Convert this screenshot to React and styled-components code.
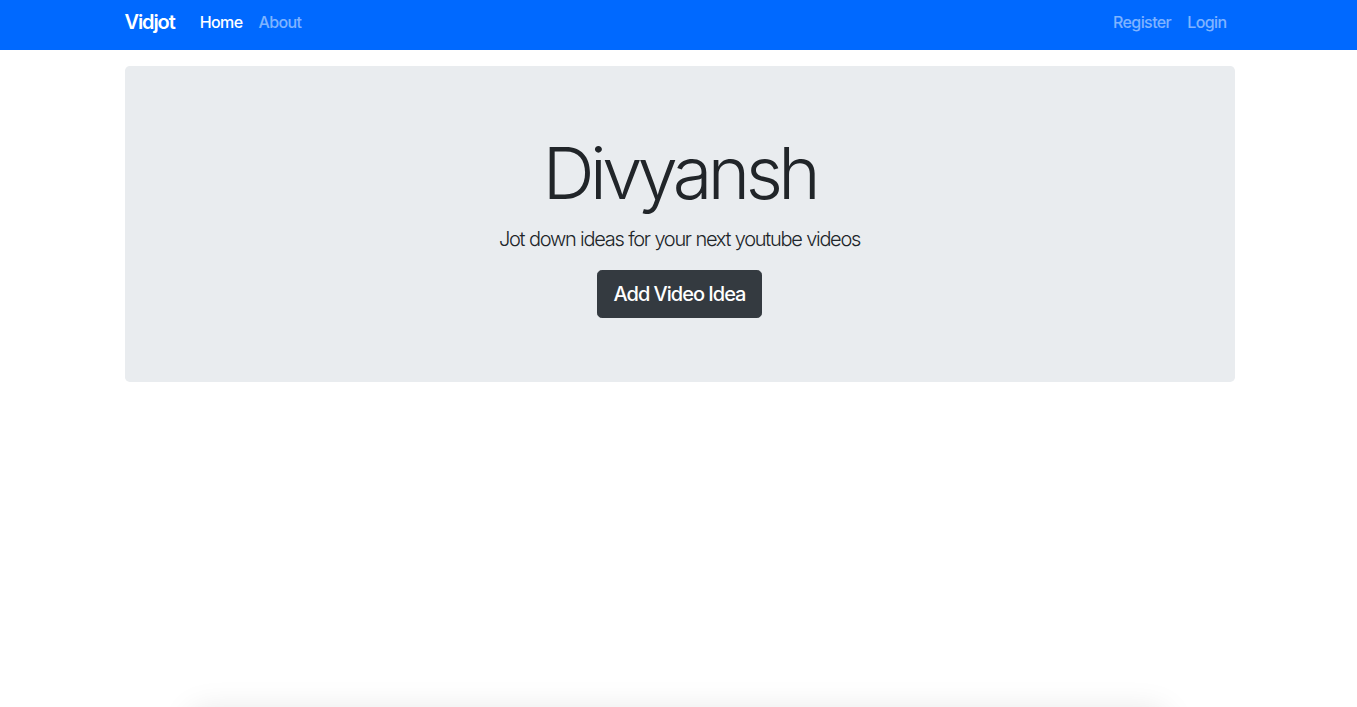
import React from "react";
import styled, { createGlobalStyle } from "styled-components";

const Global = createGlobalStyle`
  * { box-sizing: border-box; }
  html, body { margin: 0; padding: 0; background: #fff; }
  body {
    font-family: Inter, "Noto Sans", "Liberation Sans", sans-serif;
    color: #212529;
    font-size: 16px;
    line-height: 1.5;
    overflow: hidden;
  }
`;

const Navbar = styled.nav`
  background: #0069ff;
  height: 50px;
  margin-bottom: 16px;
`;

const Container = styled.div`
  width: 1140px;
  margin: 0 auto;
  padding: 0 14px 0 16px;
`;

const NavInner = styled(Container)`
  height: 100%;
  display: flex;
  align-items: center;
  padding-bottom: 6px;
`;

const Brand = styled.a`
  font-size: 20px;
  font-weight: 600;
  color: #fff;
  text-decoration: none;
  margin-right: 17px;
  letter-spacing: -1.1px;
  line-height: 30px;
`;

const NavList = styled.div`
  display: flex;
  align-items: center;
  margin-left: ${(p) => (p.$right ? "auto" : "0")};
`;

const NavLink = styled.a`
  padding: 8px;
  font-size: 16px;
  font-weight: 500;
  line-height: 24px;
  text-decoration: none;
  color: ${(p) => (p.$active ? "#fff" : "rgba(255,255,255,0.5)")};
  letter-spacing: -0.6px;
`;

const Jumbotron = styled.section`
  background: #e9ecef;
  border-radius: 4.8px;
  padding: 64px 32px;
  text-align: center;
`;

const Title = styled.h1`
  margin: 0 0 8px;
  font-size: 72px;
  font-weight: 300;
  line-height: 1.2;
  letter-spacing: -4.5px;
`;

const Lead = styled.p`
  margin: 0 0 16px;
  font-size: 20px;
  font-weight: 300;
  line-height: 30px;
  letter-spacing: -1.3px;
  word-spacing: 0.4px;
`;

const Button = styled.a`
  display: inline-block;
  background: #343a40;
  color: #fff;
  border: 1px solid #343a40;
  border-radius: 4.8px;
  padding: 8px 16px;
  font-size: 20px;
  font-weight: 500;
  line-height: 30px;
  text-decoration: none;
  letter-spacing: -1px;
`;

const BottomShadow = styled.div`
  position: fixed;
  left: 190px;
  right: 190px;
  top: 718px;
  height: 40px;
  border-radius: 14px;
  background: #fff;
  box-shadow: 0 -8px 32px rgba(0, 0, 0, 0.1);
`;

export default function App() {
  return (
    <>
      <Global />
      <Navbar>
        <NavInner>
          <Brand href="#">Vidjot</Brand>
          <NavList>
            <NavLink $active href="#">Home</NavLink>
            <NavLink href="#">About</NavLink>
          </NavList>
          <NavList $right>
            <NavLink href="#">Register</NavLink>
            <NavLink href="#">Login</NavLink>
          </NavList>
        </NavInner>
      </Navbar>
      <Container>
        <Jumbotron>
          <Title>Divyansh</Title>
          <Lead>Jot down ideas for your next youtube videos</Lead>
          <Button href="#">Add Video Idea</Button>
        </Jumbotron>
      </Container>
      <BottomShadow />
    </>
  );
}
